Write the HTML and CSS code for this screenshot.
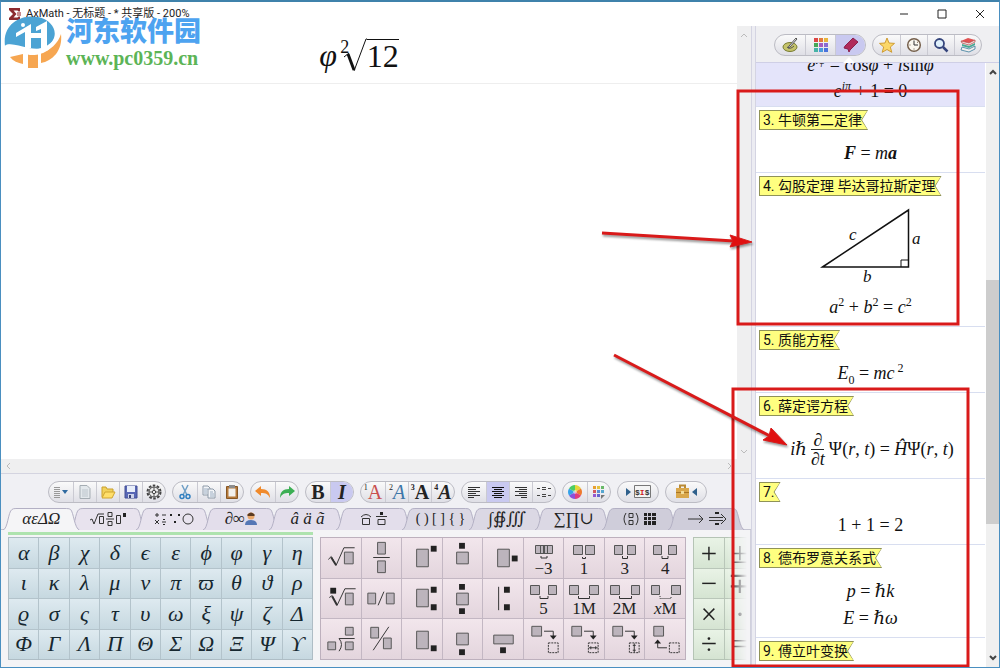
FILE: index.html
```html
<!DOCTYPE html>
<html lang="zh-CN">
<head>
    <meta charset="UTF-8">
    <title>AxMath - 无标题</title>
    <link rel="stylesheet" href="styles.css">
</head>
<body>
<div class="window">
    <header class="titlebar">
        <svg class="app-icon" viewBox="0 0 12 12"><path d="M0 0h11v3.500H9.500L8.500 2.500H4.500L7.500 6l-3 3.500h4l1-1H11V12H0v-2l4-4-4-4z" fill="#8c2a2e"/><path d="M8 4h4v4H8z" fill="#c98a8c"/></svg>
        <span class="title">AxMath - 无标题 - * 共享版 - 200%</span>
        <div class="win-buttons">
            <button aria-label="最小化"><svg viewBox="0 0 10 10"><path d="M1 5h8"/></svg></button>
            <button aria-label="最大化"><svg viewBox="0 0 10 10"><path d="M1 1h8v8H1z"/></svg></button>
            <button aria-label="关闭"><svg viewBox="0 0 10 10"><path d="M1 1l8 8M9 1L1 9"/></svg></button>
        </div>
    </header>

    <div class="main">
        <div class="editor">
            <div class="canvas-row">
                <div class="canvas">
                    <div class="canvas-line">
                        <i>φ</i><span class="radical"><sup>2</sup><svg viewBox="0 0 24 34"><path d="M1 19l5-4" stroke-width="1"/><path d="M5 16l6 16" stroke-width="3"/><path d="M11 33L23 1h2" stroke-width="1"/></svg></span><span class="radicand">12</span>
                    </div>
                </div>
                <div class="vscroll light"><svg viewBox="0 0 8 6"><path d="M1 5l3-3 3 3"/></svg><svg viewBox="0 0 8 6"><path d="M1 1l3 3 3-3"/></svg></div>
            </div>
            <div class="hscroll"><svg viewBox="0 0 6 8"><path d="M5 1L2 4l3 3"/></svg><svg viewBox="0 0 6 8"><path d="M1 1l3 3-3 3"/></svg></div>

            <div class="toolbar">
                <div class="group">
                    <button aria-label="菜单"><svg viewBox="0 0 16 16"><path d="M1 3.500h6M1 5.500h6M1 7.500h6M1 9.500h6M1 11.500h6M1 13.500h6" stroke="#999"/><path d="M9 6h6l-3 4z" fill="#2f6aa0"/></svg></button>
                    <button aria-label="新建"><svg viewBox="0 0 16 16"><path d="M3 1.500h7l3 3v10H3z" fill="#e3e8ec" stroke="#a5adb3"/><path d="M5 6h6M5 8h6M5 10h6M5 12h6" stroke="#bcc5cc"/></svg></button>
                    <button aria-label="打开"><svg viewBox="0 0 16 16"><path d="M2 13V3h4l1 2h6v3" fill="#f2d25c" stroke="#c9a02c"/><path d="M2 14l3-6h10l-3 6z" fill="#ffdf6b" stroke="#d0a530"/></svg></button>
                    <button aria-label="保存"><svg viewBox="0 0 16 16"><path d="M2 2h12v12H2z" fill="#5867b5" stroke="#434f95"/><path d="M4 2h8v6H4z" fill="#e8eefa"/><path d="M5 10h6v4H5z" fill="#cdd3ea"/><path d="M6 11h2v3H6z" fill="#3a4478"/></svg></button>
                    <button aria-label="设置"><svg viewBox="0 0 16 16"><circle cx="8" cy="8" r="6.500" fill="none" stroke="#444" stroke-width="2" stroke-dasharray="2.600 1.480"/><circle cx="8" cy="8" r="5" fill="#eee" stroke="#444"/><circle cx="8" cy="8" r="1.700" fill="none" stroke="#444"/><path d="M8 3v3M8 10v3M3 8h3M10 8h3" stroke="#555"/></svg></button>
                </div>
                <div class="group">
                    <button aria-label="剪切"><svg viewBox="0 0 16 16"><path d="M5 1l5 10M11 1L6 11" stroke="#6f9fc6" stroke-width="1.500"/><circle cx="5" cy="12.500" r="2" fill="none" stroke="#2f7fc0" stroke-width="1.500"/><circle cx="11" cy="12.500" r="2" fill="none" stroke="#2f7fc0" stroke-width="1.500"/></svg></button>
                    <button aria-label="复制"><svg viewBox="0 0 16 16"><path d="M2 2h5l2 2v7H2z" fill="#f3f5f8" stroke="#8d9aa8"/><path d="M7 5h5l2 2v7H7z" fill="#f3f5f8" stroke="#8d9aa8"/><path d="M3 5h4M3 7h3M3 9h3M9 8h3M9 10h4M9 12h4" stroke="#9caec2"/></svg></button>
                    <button aria-label="粘贴"><svg viewBox="0 0 16 16"><path d="M2.500 2.500h11v12h-11z" fill="#b5793a" stroke="#875623"/><path d="M4.500 4.500h7v8h-7z" fill="#f2f0ec"/><path d="M5 1h6v3H5z" fill="#8d8d8d"/></svg></button>
                </div>
                <div class="group">
                    <button aria-label="撤销"><svg viewBox="0 0 16 16"><path d="M0 7l6-5v3c6 0 9 3 9 9-2-4-4-5-9-5v3z" fill="#f08a2c"/></svg></button>
                    <button aria-label="重做"><svg viewBox="0 0 16 16"><path d="M16 7l-6-5v3c-6 0-9 3-9 9 2-4 4-5 9-5v3z" fill="#3caf54"/></svg></button>
                </div>
                <div class="group letters">
                    <button>B</button>
                    <button class="on"><i>I</i></button>
                </div>
                <div class="group letters fonts">
                    <button class="red"><sup>1</sup>A</button>
                    <button class="blue"><sup>2</sup><i>A</i></button>
                    <button class="heavy"><sup>3</sup>A</button>
                    <button class="heavy"><sup>4</sup><i>A</i></button>
                </div>
                <div class="group">
                    <button aria-label="左对齐"><svg viewBox="0 0 16 16"><path d="M2 3.500h12M2 5.500h8M2 7.500h12M2 9.500h8M2 11.500h12M2 13.500h6" stroke="#333"/></svg></button>
                    <button class="on" aria-label="居中"><svg viewBox="0 0 16 16"><path d="M2 3.500h12M4 5.500h8M2 7.500h12M4 9.500h8M2 11.500h12M4 13.500h8" stroke="#111"/></svg></button>
                    <button aria-label="右对齐"><svg viewBox="0 0 16 16"><path d="M2 3.500h12M6 5.500h8M2 7.500h12M6 9.500h8M2 11.500h12M8 13.500h6" stroke="#333"/></svg></button>
                    <button aria-label="对齐等号"><svg viewBox="0 0 16 16"><path d="M1 4.500h3M6 3.500h4M6 5.500h4M12 4.500h3M1 11.500h3M6 10.500h4M6 12.500h4M12 11.500h3" stroke="#444"/></svg></button>
                </div>
                <div class="group">
                    <button aria-label="颜色"><svg viewBox="0 0 16 16"><path d="M8 8V1a7 7 0 0 1 6 3.500z" fill="#e5d538"/><path d="M8 8l6-3.500a7 7 0 0 1 0 7z" fill="#ef7a2d"/><path d="M8 8l6 3.500A7 7 0 0 1 8 15z" fill="#e23c7c"/><path d="M8 8v7a7 7 0 0 1-6-3.500z" fill="#8b51dc"/><path d="M8 8l-6 3.500a7 7 0 0 1 0-7z" fill="#35a2e8"/><path d="M8 8L2 4.500A7 7 0 0 1 8 1z" fill="#4ccc62"/><circle cx="8" cy="8" r="2" fill="#fff" opacity=".5"/></svg></button>
                    <button aria-label="调色板"><svg viewBox="0 0 16 16"><path d="M2 2h3v3H2z" fill="#e8a030"/><path d="M6 2h3v3H6z" fill="#e3c33c"/><path d="M10 2h3v3h-3z" fill="#68b868"/><path d="M2 6h3v3H2z" fill="#d45860"/><path d="M6 6h3v3H6z" fill="#5b8ed2"/><path d="M10 6h3v3h-3z" fill="#55a6d0"/><path d="M2 10h3v3H2z" fill="#9458d0"/><path d="M6 10h3v3H6z" fill="#6565cf"/><path d="M10 11h4l-4 4z" fill="#777"/></svg></button>
                </div>
                <div class="group wide">
                    <button aria-label="公式代码"><svg viewBox="0 0 28 16"><path d="M2 4l5 4-5 4z" fill="#2f608c"/><path d="M10.500 1.500h16v12h-16z" fill="#f4f4f4" stroke="#777"/><text x="11" y="11" class="code">$<tspan fill="#c22">I</tspan>$</text></svg></button>
                </div>
                <div class="group wide">
                    <button aria-label="工具箱"><svg viewBox="0 0 28 16"><path d="M8 4V1.500h5V4" fill="none" stroke="#b98a35" stroke-width="2"/><path d="M4 4h13v10H4z" fill="#d9a74b"/><path d="M4 8h13v1H4z" fill="#a87524"/><path d="M9 7h3v3H9z" fill="#f3dd9a"/><path d="M25 4l-5 4 5 4z" fill="#2f608c"/></svg></button>
                </div>
            </div>

            <svg class="defs">
                <symbol id="tab" viewBox="0 0 77 22" preserveAspectRatio="none"><path d="M0 22C5 21 5 4 9 1.500Q10 .5 13 .5H64Q67 .5 68 1.500C71 4 72 21 77 22" stroke="#b3b0c4"/></symbol>
            </svg>
            <nav class="tabs">
                <button class="active"><svg class="shape"><use href="#tab"/></svg><span>αεΔΩ</span></button>
                <button aria-label="根式分式"><svg class="shape"><use href="#tab"/></svg><svg class="glyph" viewBox="0 0 38 16"><path d="M1 9l2-1 2 5 4-10h6M17 8h8" class="ln"/><path d="M10.500 5.500h4v7h-4zM19 1.500h4v4h-4zM19 10.500h4v4h-4zM27.500 4.500h4v8h-4z" class="ln"/><path d="M34 2h3v4h-3z" class="blk"/></svg></button>
                <button aria-label="运算符"><svg class="shape"><use href="#tab"/></svg><svg class="glyph" viewBox="0 0 40 16"><path d="M1 4h4M3 2v4M8 4h4M1 9l4 4M5 9l-4 4M8 11h4" class="ln"/><path d="M9 8h2v1H9zM9 13h2v1H9zM16 3h2v2h-2zM24 3h2v2h-2zM20 10h2v2h-2z" class="blk"/><circle cx="34" cy="8" r="5" class="ln"/></svg></button>
                <button><svg class="shape"><use href="#tab"/></svg><span>∂∞</span><svg class="person" viewBox="0 0 12 14"><circle cx="6" cy="4" r="3.500" fill="#e9a86b"/><path d="M2 3q4-5 8 0L9 4H3z" fill="#5b3b22"/><path d="M0 13q0-5 6-5t6 5z" fill="#5577b5"/></svg></button>
                <button><svg class="shape"><use href="#tab"/></svg><span><i>â ä ã</i></span></button>
                <button aria-label="帽与杠"><svg class="shape"><use href="#tab"/></svg><svg class="glyph" viewBox="0 0 28 16"><path d="M1 6q5-5 10 0M2.500 7.500h7v6h-7zM16 5.500h11M18 8.500h7v5h-7z" class="ln"/><path d="M20 1h3v3h-3z" class="blk"/></svg></button>
                <button class="brackets"><svg class="shape"><use href="#tab"/></svg><span>( ) [ ] { }</span></button>
                <button><svg class="shape"><use href="#tab"/></svg><span>∫∯∭</span></button>
                <button><svg class="shape"><use href="#tab"/></svg><span>∑∏∪</span></button>
                <button aria-label="矩阵"><svg class="shape"><use href="#tab"/></svg><svg class="glyph" viewBox="0 0 36 16"><path d="M4 2q-4 6 0 12M14 2q4 6 0 12M7 2.500h4v4H7zM7 9.500h4v4H7z" class="ln"/><path d="M22 2h3v3h-3zM26 2h3v3h-3zM30 2h4v3h-4zM22 6h3v3h-3zM26 6h3v3h-3zM30 6h4v3h-4zM22 10h3v4h-3zM26 10h3v4h-3zM30 10h4v4h-4z" class="blk"/></svg></button>
                <button aria-label="箭头"><svg class="shape"><use href="#tab"/></svg><svg class="glyph" viewBox="0 0 40 16"><path d="M1 8h15M12 4l4 4-4 4M22 6.500h14M22 9.500h14M34 3l5 5-5 5" class="ln"/><path d="M28 1h4v2h-4zM28 12h4v2h-4z" class="blk"/></svg></button>
            </nav>

            <div class="palettes">
                <div class="greek">
                    <button>α</button><button>β</button><button>χ</button><button>δ</button><button>ϵ</button><button>ε</button><button>ϕ</button><button>φ</button><button>γ</button><button>η</button>
                    <button>ι</button><button>κ</button><button>λ</button><button>μ</button><button>ν</button><button>π</button><button>ϖ</button><button>θ</button><button>ϑ</button><button>ρ</button>
                    <button>ϱ</button><button>σ</button><button>ς</button><button>τ</button><button>υ</button><button>ω</button><button>ξ</button><button>ψ</button><button>ζ</button><button>Δ</button>
                    <button>Φ</button><button>Γ</button><button>Λ</button><button>Π</button><button>Θ</button><button>Σ</button><button>Ω</button><button>Ξ</button><button>Ψ</button><button>ϒ</button>
                </div>
                <div class="struct">
                    <button aria-label="平方根"><svg viewBox="0 0 40 40"><path d="M7 22l3-3 5 9 8-18h11" class="ln"/><path d="M10 20l5 8" class="ln thick"/><path d="M23.500 14.500h9v12h-9z" class="box"/></svg></button>
                    <button aria-label="分式"><svg viewBox="0 0 40 40"><path d="M16.500 4.500h8v12h-8zM16.500 23.500h8v12h-8z" class="box"/><path d="M12 20h17" class="ln"/></svg></button>
                    <button aria-label="上标"><svg viewBox="0 0 40 40"><path d="M14.500 11.500h12v18h-12z" class="box"/><path d="M29 8h6v6h-6z" class="blk"/></svg></button>
                    <button aria-label="顶标"><svg viewBox="0 0 40 40"><path d="M14.500 14.500h12v12h-12z" class="box"/><path d="M17 5h6v6h-6z" class="blk"/></svg></button>
                    <button aria-label="右标"><svg viewBox="0 0 40 40"><path d="M14.500 11.500h12v18h-12z" class="box"/><path d="M29 18h6v6h-6z" class="blk"/></svg></button>
                    <button class="space"><svg viewBox="0 0 40 22"><path d="M11.500 6.500h17v8h-17zM16.500 6.500h3v8h-3zM20.500 6.500h3v8h-3z" class="box"/><path d="M17 17v2h6v-2" class="ln"/></svg>−3</button>
                    <button class="space"><svg viewBox="0 0 40 22"><path d="M9.500 6.500h9v9h-9zM21.500 6.500h9v9h-9z" class="box"/><path d="M18.500 18v1.500h3V18" class="ln"/></svg>1</button>
                    <button class="space"><svg viewBox="0 0 40 22"><path d="M9.500 6.500h8v9h-8zM22.500 6.500h8v9h-8z" class="box"/><path d="M17.500 17v2.500h5V17" class="ln"/></svg>3</button>
                    <button class="space"><svg viewBox="0 0 40 22"><path d="M8.500 6.500h8v9h-8zM23.500 6.500h8v9h-8z" class="box"/><path d="M17 17v2.500h6V17" class="ln"/></svg>4</button>

                    <button aria-label="n次根"><svg viewBox="0 0 40 40"><path d="M8 19l3-2 5 10 8-17h11" class="ln"/><path d="M11 18l5 9" class="ln thick"/><path d="M24.500 14.500h8v12h-8z" class="box"/><path d="M9 9h6v6H9z" class="blk"/></svg></button>
                    <button aria-label="行内分式"><svg viewBox="0 0 40 40"><path d="M6.500 14.500h8v11h-8zM25.500 14.500h8v11h-8z" class="box"/><path d="M17 27l6-14" class="ln"/></svg></button>
                    <button aria-label="上下标"><svg viewBox="0 0 40 40"><path d="M14.500 10.500h12v18h-12z" class="box"/><path d="M29 8h6v6h-6zM29 26h6v6h-6z" class="blk"/></svg></button>
                    <button aria-label="顶底标"><svg viewBox="0 0 40 40"><path d="M14.500 14.500h12v12h-12z" class="box"/><path d="M17 5h6v6h-6zM17 30h6v6h-6z" class="blk"/></svg></button>
                    <button aria-label="竖线标"><svg viewBox="0 0 40 40"><path d="M15.500 8v24" class="ln"/><path d="M21 8h6v6h-6zM21 26h6v6h-6z" class="blk"/></svg></button>
                    <button class="space"><svg viewBox="0 0 40 22"><path d="M6.500 6.500h9v9h-9zM24.500 6.500h8v9h-8z" class="box"/><path d="M16 17v2.500h8V17" class="ln"/></svg>5</button>
                    <button class="space"><svg viewBox="0 0 40 22"><path d="M5.500 6.500h9v9h-9zM25.500 6.500h9v9h-9z" class="box"/><path d="M14.500 17v2.500h11V17" class="ln"/></svg>1M</button>
                    <button class="space"><svg viewBox="0 0 40 22"><path d="M5.500 6.500h9v9h-9zM26.500 6.500h8v9h-8z" class="box"/><path d="M14.500 17v2.500h12V17" class="ln"/></svg>2M</button>
                    <button class="space"><svg viewBox="0 0 40 22"><path d="M6.500 6.500h8v9h-8zM26.500 6.500h9v9h-9z" class="box"/><path d="M15 17v2.500h11V17" class="ln dash"/></svg><span><i>x</i>M</span></button>

                    <button aria-label="长除"><svg viewBox="0 0 40 40"><path d="M24.500 7.500h8v8h-8zM6.500 22.500h8v8h-8zM24.500 22.500h8v8h-8z" class="box"/><path d="M18 32q5-7 0-13h16" class="ln"/></svg></button>
                    <button aria-label="斜分式"><svg viewBox="0 0 40 40"><path d="M9.500 7.500h8v11h-8zM22.500 18.500h8v11h-8z" class="box"/><path d="M12 31L28 7" class="ln"/></svg></button>
                    <button aria-label="下标"><svg viewBox="0 0 40 40"><path d="M14.500 11.500h12v18h-12z" class="box"/><path d="M29 26h6v6h-6z" class="blk"/></svg></button>
                    <button aria-label="底标"><svg viewBox="0 0 40 40"><path d="M14.500 13.500h12v12h-12z" class="box"/><path d="M17 30h6v6h-6z" class="blk"/></svg></button>
                    <button aria-label="宽底标"><svg viewBox="0 0 40 40"><path d="M10.500 15.500h20v9h-20z" class="box"/><path d="M17 28h6v6h-6z" class="blk"/></svg></button>
                    <button aria-label="占位"><svg viewBox="0 0 40 40"><path d="M7.500 6.500h10v10h-10z" class="box"/><path d="M20 11.500h9.500V18" class="ln"/><path d="M26 16h7l-3.500 4z" class="blk"/><path d="M24.500 23.500h10v10h-10z" class="ln dots"/></svg></button>
                    <button aria-label="横向占位"><svg viewBox="0 0 40 40"><path d="M7.500 6.500h10v10h-10z" class="box"/><path d="M20 11.500h9.500V18" class="ln"/><path d="M26 16h7l-3.500 4z" class="blk"/><path d="M24.500 23.500h10v10h-10z" class="ln dots"/><path d="M25 28.500h9M27 27v3M32 27v3" class="ln"/></svg></button>
                    <button aria-label="纵向占位"><svg viewBox="0 0 40 40"><path d="M7.500 6.500h10v10h-10z" class="box"/><path d="M20 11.500h9.500V18" class="ln"/><path d="M26 16h7l-3.500 4z" class="blk"/><path d="M24.500 23.500h10v10h-10z" class="ln dots"/><path d="M29.500 24v9M28 26h3M28 31h3" class="ln"/></svg></button>
                    <button aria-label="前置占位"><svg viewBox="0 0 40 40"><path d="M8.500 6.500h10v10h-10z" class="box"/><path d="M22 28.500h-9.500V22" class="ln"/><path d="M9 24h7l-3.500-4z" class="blk"/><path d="M24.500 23.500h10v10h-10z" class="ln dots"/></svg></button>
                </div>
                <div class="ops">
                    <button>+</button><button>±</button>
                    <button>−</button><button>∓</button>
                    <button>×</button><button>·</button>
                    <button>÷</button><button>=</button>
                </div>
            </div>
        </div>

        <div class="splitter"></div>

        <aside class="sidebar">
            <div class="side-tools">
                <div class="group">
                    <button aria-label="手写"><svg viewBox="0 0 16 16"><ellipse cx="8" cy="10" rx="7" ry="4.500" fill="#c5c36a" stroke="#777b30"/><path d="M5 10q3 3 7-1" fill="none" stroke="#555"/><path d="M14 1L7 9l-1 2 2-1 7-8z" fill="#eee" stroke="#555"/></svg></button>
                    <button aria-label="符号"><svg viewBox="0 0 16 16"><path d="M1 1h4v4H1z" fill="#dc4646"/><path d="M6 1h4v4H6z" fill="#e37a3b"/><path d="M11 1h4v4h-4z" fill="#e8b53c"/><path d="M1 6h4v4H1z" fill="#45a757"/><path d="M6 6h4v4H6z" fill="#a45dc0"/><path d="M11 6h4v4h-4z" fill="#8a6cd0"/><path d="M1 11h4v4H1z" fill="#46b3a6"/><path d="M6 11h4v4H6z" fill="#4a9bdc"/><path d="M11 11h4v4h-4z" fill="#4a72dc"/></svg></button>
                    <button class="on" aria-label="书签"><svg viewBox="0 0 16 16"><path d="M10 1l5 4-8 8-1 2-1-3-4-1 1-2z" fill="#b02a5b" stroke="#8a1f4c"/></svg></button>
                </div>
                <div class="group second">
                    <button aria-label="收藏"><svg viewBox="0 0 16 16"><path d="M8 1l2 5 5.500.4-4.200 3.600 1.500 5.300L8 12.500l-4.800 2.800L4.700 10 .5 6.400 6 6z" fill="#fbd768" stroke="#cf9c33"/></svg></button>
                    <button aria-label="历史"><svg viewBox="0 0 16 16"><circle cx="8" cy="8" r="6.300" fill="#fbf7ef" stroke="#75604c" stroke-width="1.500"/><path d="M8 3.500V8h4" fill="none" stroke="#333"/><path d="M3.500 8h1M8 12.500v-1M12 5l-1 .5" stroke="#75604c"/></svg></button>
                    <button aria-label="搜索"><svg viewBox="0 0 16 16"><circle cx="6.500" cy="6.500" r="4.500" fill="#dff0fb" stroke="#35457c" stroke-width="1.800"/><path d="M10 10l4.500 4.500" stroke="#35457c" stroke-width="2.500"/></svg></button>
                    <button aria-label="公式库"><svg viewBox="0 0 16 16"><path d="M1 4l7-3 7 2-6 3z" fill="#e05252"/><path d="M1 4l8 2 6-3v2L9 8 2 6z" fill="#f3f0ee" stroke="#b33b3b" stroke-width=".7"/><path d="M2 7l7 2 6-3v2l-6 3-7-2z" fill="#47a892"/><path d="M2 10l7 2 6-3v3l-6 3-8-2z" fill="#f3f0ee" stroke="#397b9c" stroke-width=".8"/></svg></button>
                </div>
                <svg class="notch" viewBox="0 0 12 6"><path d="M0 6l6-6 6 6z"/></svg>
            </div>
            <div class="side-body">
                <div class="list">
                    <section class="entry selected">
                        <p><i>e<sup>iφ</sup></i> = cos<i>φ</i> + <i>i</i>sin<i>φ</i></p>
                        <p><i>e<sup>iπ</sup></i> + 1 = 0</p>
                    </section>
                    <section class="entry">
                        <h2 class="tag"><span>3. 牛顿第二定律</span></h2>
                        <p><b><i>F</i></b> = <i>m<b>a</b></i></p>
                    </section>
                    <section class="entry">
                        <h2 class="tag"><span>4. 勾股定理 毕达哥拉斯定理</span></h2>
                        <svg class="triangle" viewBox="0 0 110 89"><path d="M5.500 65L91.500 8v57z"/><path d="M84 65v-7h7.500" class="thin"/><text x="32" y="38">c</text><text x="95" y="42">a</text><text x="46" y="80">b</text></svg>
                        <p><i>a</i><sup>2</sup> + <i>b</i><sup>2</sup> = <i>c</i><sup>2</sup></p>
                    </section>
                    <section class="entry">
                        <h2 class="tag"><span>5. 质能方程</span></h2>
                        <p><i>E</i><sub>0</sub> = <i>mc</i><sup> 2</sup></p>
                    </section>
                    <section class="entry">
                        <h2 class="tag"><span>6. 薛定谔方程</span></h2>
                        <p class="tall"><i>iℏ</i><span class="frac"><span>∂</span><span>∂<i>t</i></span></span>Ψ(<i>r</i>, <i>t</i>) = <i>Ĥ</i>Ψ(<i>r</i>, <i>t</i>)</p>
                    </section>
                    <section class="entry">
                        <h2 class="tag"><span>7.</span></h2>
                        <p>1 + 1 = 2</p>
                    </section>
                    <section class="entry">
                        <h2 class="tag"><span>8. 德布罗意关系式</span></h2>
                        <p><i>p</i> = <i>ℏk</i></p>
                        <p class="next"><i>E</i> = <i>ℏω</i></p>
                    </section>
                    <section class="entry">
                        <h2 class="tag"><span>9. 傅立叶变换</span></h2>
                    </section>
                </div>
                <div class="vscroll">
                    <svg viewBox="0 0 8 6"><path d="M1 5l3-3 3 3"/></svg>
                    <div class="track"><div class="thumb"></div></div>
                    <svg viewBox="0 0 8 6"><path d="M1 1l3 3 3-3"/></svg>
                </div>
            </div>
        </aside>
    </div>

    <div class="watermark">
        <svg viewBox="0 0 60 60">
            <path d="M1 35C-2 12 18 3 34 6c14 3 20 14 15 23-4 8-12 10-24 8C14 35 6 31 1 35z" fill="#4ba3d4"/>
            <path d="M57 23c2 17-9 27-20 29V42c9-3 17-9 20-19zM6 46l13-3v10c-5-1-10-3-13-7zM24 43l10-1v15H24z" fill="#f6a651"/>
            <path d="M12 22l15-9v24h-6V21l-9 5zM32 16l11-6v27h-6V18l-5 2zM24 22h16v5H24z" fill="#fff"/>
            <path d="M1 35c4-5 10 4 24 4 14 0 24-6 29-17-1 14-14 23-28 22-10-1-17-9-25-9z" fill="#fff"/>
            <circle cx="19" cy="14" r="2" fill="#fff"/>
        </svg>
        <div>
            <strong>河东软件园</strong>
            <span>www.pc0359.cn</span>
        </div>
    </div>

    <!-- callouts drawn over the window -->
    <svg class="marks" viewBox="0 0 1000 668">
        <rect x="738" y="91" width="220" height="233"/>
        <rect x="733" y="389" width="235" height="277"/>
        <g class="arrow"><path d="M602 233l132 8"/><path d="M752 242l-22 5 3-6-3-6z" class="head"/></g>
        <g class="arrow"><path d="M614 355l156 81"/><path d="M787 445l-24-5 6-4 2-8z" class="head"/></g>
    </svg>
</div>
</body>
</html>
```
FILE: styles.css
```css
* { box-sizing: border-box; }
body { margin: 0; font-family: "Noto Sans", "Noto Sans CJK SC", sans-serif; font-size: 12px; color: #222; }
button { border: 0; padding: 0; margin: 0; background: none; color: inherit; font: inherit; }
svg { display: block; }
h2, p { margin: 0; font-weight: normal; }

.window { position: relative; display: flex; flex-direction: column; height: 100vh; overflow: hidden; background: #fff; border: 1px solid #4a8fc0; border-top: 2px solid #3f82ab; }

.titlebar { display: flex; align-items: center; height: 24px; flex: none; padding-left: 8px; }
.app-icon { width: 12px; height: 12px; margin-right: 5px; }
.title { position: relative; z-index: 2; font-family: Roboto, "Noto Sans CJK SC", sans-serif; font-size: 11px; line-height: 14px; }
.win-buttons { margin-left: auto; display: flex; }
.win-buttons button { width: 38px; height: 22px; display: grid; place-items: center; }
.win-buttons svg { width: 10px; height: 10px; fill: none; stroke: #222; }

.main { display: flex; flex: 1; min-height: 0; }
.editor { display: flex; flex-direction: column; flex: 1; min-width: 0; background: #f0f0f4; }
.canvas-row { display: flex; flex: 1; min-height: 0; background: #fff; }
.canvas { flex: 1; }
.canvas-line { display: flex; align-items: center; justify-content: center; height: 58px; padding-right: 20px; border-bottom: 1px solid #eee; font-family: "Liberation Serif", serif; font-size: 32px; line-height: 32px; color: #111; }
.radical { display: flex; margin-left: 2px; }
.radical sup { width: 12px; margin-right: -8px; font-size: 18px; line-height: 18px; text-align: center; }
.radical svg { width: 24px; height: 34px; fill: none; stroke: #111; }
.radicand { border-top: 1px solid #111; height: 32px; line-height: 32px; }

.vscroll { display: flex; flex-direction: column; align-items: center; width: 13px; background: #f0f0f0; padding: 6px 0; }
.vscroll svg, .hscroll svg { width: 8px; height: 6px; fill: none; stroke: #444; stroke-width: 2; }
.vscroll.light { width: 14px; background: #efeff0; justify-content: space-between; padding: 6px 0 4px; }
.vscroll.light svg, .hscroll svg { stroke: #bbb; stroke-width: 1; }
.hscroll { display: flex; align-items: center; justify-content: space-between; height: 15px; flex: none; padding: 0 18px 0 4px; background: #efeff0; border-bottom: 1px solid #d4d4e0; }
.hscroll svg { width: 6px; height: 8px; }

.toolbar { display: flex; flex: none; gap: 6px; height: 34px; padding: 7px 0 0 47px; }
.group { display: flex; height: 22px; border: 1px solid #bcbcc4; border-radius: 11px; background: linear-gradient(#fafafa, #dfdfe6); overflow: hidden; }
.group button { display: flex; align-items: center; justify-content: center; width: 23px; height: 20px; border-left: 1px solid #cacad2; }
.group button:first-child { width: 24px; border-left: 0; }
.group button.on { background: #c9c9f0; }
.group svg { width: 16px; height: 16px; }
.group.wide button { width: 40px; }
.group.wide svg { width: 28px; height: 16px; }
.code { font: bold 8px "Liberation Mono", monospace; fill: #333; }
.letters { font-family: "Liberation Serif", serif; font-size: 20px; font-weight: bold; line-height: 20px; }
.fonts sup { font-size: 8px; line-height: 8px; align-self: flex-start; margin-top: 2px; color: #222; }
.fonts button { font-weight: normal; }
.fonts .heavy { font-weight: bold; }
.fonts .red { color: #c94f4f; }
.fonts .blue { color: #3d76a8; }

.defs { display: none; }
.tabs { display: flex; flex: none; height: 22px; padding: 0 11px 0 7px; border-bottom: 1px solid #c4c4d2; }
.tabs button { position: relative; display: flex; align-items: center; justify-content: center; flex: 1; color: #222; fill: #e8e3ee; font-family: "Liberation Serif", "DejaVu Serif", serif; font-size: 17px; }
.tabs button:nth-child(n+4) { fill: #e3deeb; }
.tabs button:nth-child(n+7) { fill: #dbd8e4; }
.tabs button:nth-child(n+10) { fill: #cfcdda; }
.tabs button.active { fill: #f5f5f7; z-index: 1; font-style: italic; }
.tabs button.brackets { font-size: 14px; }
.tabs span, .tabs .glyph, .tabs .person { position: relative; z-index: 1; }
.tabs .shape { position: absolute; top: 0; left: -5px; width: calc(100% + 10px); height: 22px; }
.glyph { width: 40px; height: 16px; }
.person { width: 12px; height: 14px; }
.ln { fill: none; stroke: #333; }
.thick { stroke-width: 2; }
.dash { stroke-dasharray: 1 1; }
.dots { stroke-dasharray: 2 1; }
.box { fill: #bcb4bc; stroke: #555; }
.blk { fill: #222; }

.palettes { display: grid; flex: none; grid-template-columns: 305fr 366fr 57fr; gap: 7px; padding: 7px 0 7px 7px; background: #f4f4f6; border-right: 1px solid #d0d0dc; }
.palettes > div { display: grid; gap: 1px; height: 123px; border: 1px solid #aebdc5; background: #b3c3cb; }
.palettes button { min-width: 0; min-height: 0; font-family: "Liberation Serif", "DejaVu Serif", serif; line-height: 20px; }
.palettes .greek { position: relative; grid-template: repeat(4, 1fr) / repeat(10, 1fr); }
.greek::before { content: ""; position: absolute; left: -1px; right: -1px; top: -6px; height: 3px; background: #aee3ae; }
.greek button { font-style: italic; font-size: 22px; color: #16272f; background: linear-gradient(#deeaf0, #c6d8e0); }
.palettes .struct { grid-template: repeat(3, 1fr) / repeat(9, 1fr); border-color: #bdb0bd; background: #c3b7c3; }
.struct button { display: flex; flex-direction: column; align-items: center; justify-content: center; font-size: 17px; line-height: 16px; background: linear-gradient(#f2e6ec, #e3d5dd); }
.struct svg { width: 40px; height: 39px; }
.struct .space svg { flex: none; width: 40px; height: 22px; }
.palettes .ops { grid-template: repeat(4, 1fr) / repeat(2, 30px); overflow: hidden; border-color: #b5c4b5; background: #b9c6b9; border-right: 0; -webkit-mask-image: linear-gradient(90deg, #000 60%, transparent 95%); mask-image: linear-gradient(90deg, #000 60%, transparent 95%); }
.ops button { font-size: 29px; background: linear-gradient(#e9f3e6, #d5e4d2); }

.splitter { width: 5px; border: 1px solid #d4d4e2; border-width: 0 1px; background: #ececf2; }

.sidebar { display: flex; flex-direction: column; width: 243px; background: #fff; }
.side-tools { position: relative; display: flex; flex: none; gap: 6px; height: 37px; padding: 8px 0 0 18px; background: #efeff2; border-bottom: 1px solid #cfcfe6; }
.side-tools .group button { width: 30px; }
.side-tools .group.second button { width: 27px; }
.notch { position: absolute; left: 87px; bottom: -1px; width: 12px; height: 6px; fill: #fff; }
.side-body { display: flex; flex: 1; min-height: 0; justify-content: space-between; }
.list { flex: 1; overflow: hidden; margin-right: 1px; }
.track { display: flex; flex-direction: column; flex: 1; width: 13px; padding: 205px 0 131px; }
.thumb { flex: 1; background: #cdcdcd; }

.entry { padding: 3px 0 10px 3px; border-bottom: 1px solid #d8def0; font-family: "Liberation Serif", "DejaVu Serif", serif; color: #111; }
.entry p { height: 18px; margin-top: 14px; padding-right: 3px; font-size: 18px; line-height: 18px; text-align: center; }
.entry sup, .entry sub { font-size: 12px; line-height: 0; }
.entry.selected { display: flex; flex-direction: column; justify-content: flex-end; height: 44px; overflow: hidden; padding-bottom: 6px; background: #e4e4fa; }
.entry.selected p { flex: none; margin-top: 8px; }
.entry p.next { margin-top: 9px; }
.entry .tall { display: flex; align-items: center; justify-content: center; height: 38px; padding-left: 3px; white-space: pre; }
.frac { display: flex; flex-direction: column; align-items: center; margin: 0 2px; }
.frac span { line-height: 18px; padding: 0 2px; }
.frac span:first-child { border-bottom: 1px solid #222; }
.triangle { width: 110px; height: 89px; margin: 6px auto 0; fill: none; stroke: #111; stroke-width: 1.5; }
.triangle .thin { stroke-width: 1; }
.triangle text { fill: #111; stroke: none; font: italic 17px "Liberation Serif", serif; }
.entry .triangle + p { margin-top: 7px; }

/* yellow ribbon: grey shape with the yellow one inset by a pixel */
.tag { width: max-content; height: 20px; padding: 1px; background: #8f9258; clip-path: polygon(0 0, 100% 0, calc(100% - 6px) 50%, 100% 100%, 0 100%); }
.tag span { display: block; height: 18px; padding: 0 5px 0 3px; background: #ffff80; clip-path: polygon(0 0, 100% 0, calc(100% - 6px) 50%, 100% 100%, 0 100%); font: 14px/18px Roboto, "Noto Sans CJK SC", sans-serif; }

.watermark { position: absolute; left: 3px; top: 9px; display: flex; }
.watermark svg { width: 60px; height: 60px; margin-right: 2px; }
.watermark strong, .watermark span { display: block; }
.watermark strong { margin-top: 3px; font: 900 27px/32px "Noto Sans CJK SC", sans-serif; color: #4da3f0; }
.watermark span { font: bold 20px/24px "Liberation Serif", serif; color: #5cb456; }

.marks { position: absolute; z-index: 3; left: -1px; top: -2px; width: 1000px; height: 668px; fill: none; stroke: #d91a1a; stroke-width: 3; pointer-events: none; }
.arrow { filter: drop-shadow(1px 2px 1px rgba(0, 0, 0, .4)); }
.arrow path { stroke-width: 3; }
.arrow .head { fill: #e01010; stroke-width: 1; }
```
